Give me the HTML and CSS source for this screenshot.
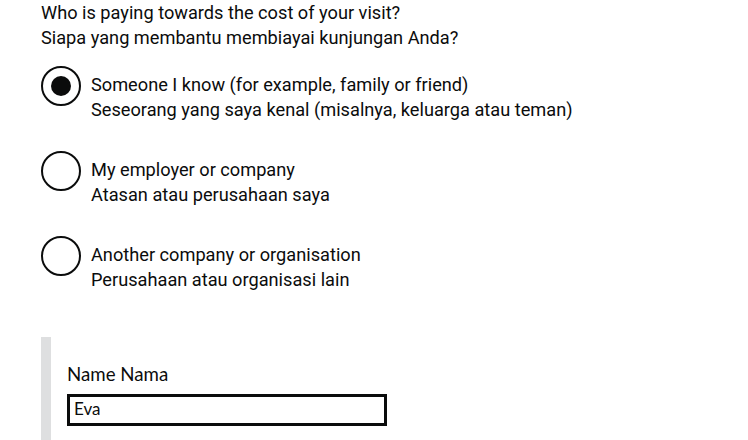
FILE: index.html
```html
<!DOCTYPE html>
<html lang="en">
<head>
<meta charset="utf-8">
<title>Who is paying</title>
<link rel="stylesheet" href="styles.css">
</head>
<body>
<main class="page">
  <fieldset class="fieldset">
    <legend class="question">
      <span class="line">Who is paying towards the cost of your visit?</span>
      <span class="line">Siapa yang membantu membiayai kunjungan Anda?</span>
    </legend>
    <div class="radios">
      <label class="item">
        <span class="radio radio--checked"></span>
        <span class="text">
          <span class="line">Someone I know (for example, family or friend)</span>
          <span class="line">Seseorang yang saya kenal (misalnya, keluarga atau teman)</span>
        </span>
      </label>
      <label class="item">
        <span class="radio"></span>
        <span class="text">
          <span class="line">My employer or company</span>
          <span class="line">Atasan atau perusahaan saya</span>
        </span>
      </label>
      <label class="item">
        <span class="radio"></span>
        <span class="text">
          <span class="line">Another company or organisation</span>
          <span class="line">Perusahaan atau organisasi lain</span>
        </span>
      </label>
    </div>
    <div class="inset">
      <label class="field-label" for="name">Name Nama</label>
      <input class="input" id="name" type="text" value="Eva">
    </div>
  </fieldset>
</main>
</body>
</html>
```
FILE: styles.css
```css
html, body {
  margin: 0;
  padding: 0;
  background: #ffffff;
}
.page {
  padding-left: 41px;
  color: #0b0c0c;
  font-family: Roboto, "Liberation Sans", sans-serif;
  font-size: 18.2px;
  line-height: 25px;
}
.fieldset {
  margin: 0;
  padding: 0;
  border: 0;
  min-width: 0;
}
.question {
  padding: 0;
  margin-top: -2px;
  display: block;
}
.line {
  display: block;
}
.radios {
  margin-top: 16px;
  display: flex;
  flex-direction: column;
  gap: 29px;
}
.item {
  display: flex;
  align-items: flex-start;
}
.radio {
  flex: none;
  box-sizing: border-box;
  width: 40px;
  height: 40px;
  border: 2px solid #0b0c0c;
  border-radius: 50%;
  display: flex;
  align-items: center;
  justify-content: center;
}
.radio--checked::after {
  content: "";
  width: 20px;
  height: 20px;
  border-radius: 50%;
  background: #0b0c0c;
}
.text {
  margin-left: 10px;
  padding-top: 6px;
}
.inset {
  margin-top: 45px;
  border-left: 10px solid #dedfe0;
  padding: 25px 0 20px 16px;
  display: flex;
  flex-direction: column;
  align-items: flex-start;
}
.field-label {
  font-family: Lato, sans-serif;
  font-size: 18.7px;
  line-height: 25px;
  margin-bottom: 7px;
}
.input {
  box-sizing: border-box;
  width: 320px;
  height: 32px;
  margin: 0;
  border: 3px solid #0b0c0c;
  border-radius: 0;
  padding: 0 4px 4px;
  font-family: Lato, sans-serif;
  font-size: 17px;
  color: #0b0c0c;
  background: #ffffff;
  outline: none;
}
```
